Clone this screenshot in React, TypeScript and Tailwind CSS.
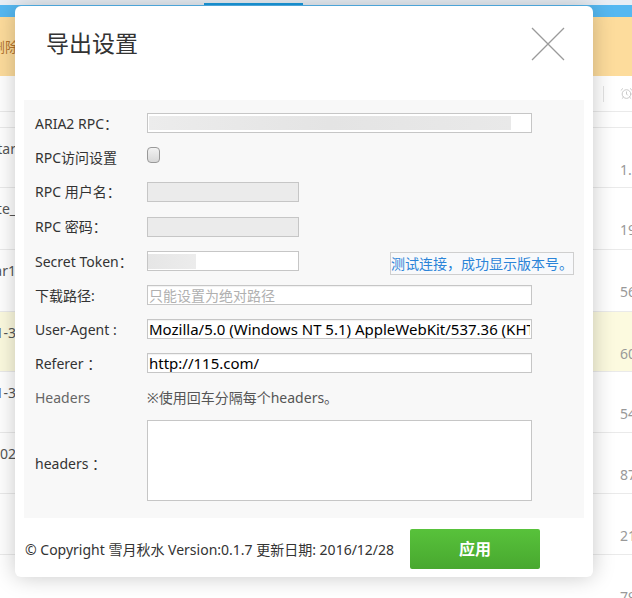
import { AlarmClock } from "lucide-react";

const FONT = {
  fontFamily: '"Noto Sans", "Noto Sans CJK SC", sans-serif',
};

interface BgRow {
  h: string;
  left: string;
  right: string;
  yellow?: boolean;
}

const ROWS: BgRow[] = [
  { h: "h-[60px]", left: "tar", right: "1.2G" },
  { h: "h-[62px]", left: "ate_", right: "19" },
  { h: "h-[62px]", left: "ar1", right: "56" },
  { h: "h-[60px]", left: "1-3", right: "60", yellow: true },
  { h: "h-[61px]", left: "1-3", right: "54" },
  { h: "h-[61px]", left: "202", right: "87" },
  { h: "h-[61px]", left: "", right: "21" },
  { h: "h-[61px]", left: "", right: "79" },
];

function Background() {
  return (
    <div className="flex flex-col">
      <div className="relative h-[5px] bg-[#e8eef5]">
        <div className="absolute left-[204px] top-[3px] h-[2px] w-[99px] bg-[#1a9be0]" />
      </div>
      <div className="h-[12px] bg-[#55b8f1]" />
      <div className="flex h-[59px] items-center bg-[#fddc9c]">
        <span className="ml-[-9px] text-[14px] text-[#b4742c]">删除</span>
      </div>
      <div className="flex h-[36px] items-center border-b border-[#eaeaea] bg-white">
        <div className="ml-[603px] h-[16px] w-px shrink-0 bg-[#e2e2e2]" />
        <AlarmClock size={13} strokeWidth={1.5} className="ml-[16px] shrink-0 text-[#bdbdbd]" />
      </div>
      <div className="h-[16px] border-b border-[#eaeaea] bg-white" />
      {ROWS.map((r, i) => (
        <div
          key={i}
          className={`flex border-b border-[#eaeaea] ${r.h} ${r.yellow ? "bg-[#fcfadf]" : "bg-white"}`}
        >
          <div className="flex w-[16px] shrink-0 justify-end overflow-hidden whitespace-nowrap pt-[12px] text-[14px] leading-[18px] text-[#555]">
            {r.left}
          </div>
          <div className="ml-[604px] shrink-0 whitespace-nowrap pt-[33px] text-[14px] leading-[18px] text-[#999]">
            {r.right}
          </div>
        </div>
      ))}
    </div>
  );
}

function Label({ children, muted }: { children: React.ReactNode; muted?: boolean }) {
  return (
    <div className={`w-[112px] shrink-0 text-[14px] ${muted ? "text-[#666]" : "text-[#333]"}`}>
      {children}
    </div>
  );
}

const inputCls =
  "h-[20px] border border-[#c6c6c6] bg-white px-[1px] text-[15px] leading-[18px] text-black outline-none shadow-[inset_0_1px_1px_rgba(0,0,0,0.06)]";

export default function App() {
  return (
    <div className="relative h-[598px] w-[632px] overflow-hidden bg-white" style={FONT}>
      <Background />

      <div className="absolute left-[15px] top-[6px] flex h-[571px] w-[578px] flex-col rounded-[6px] bg-white shadow-[0_0_22px_rgba(0,0,0,0.22)]">
        <div className="flex h-[94px] items-start justify-between">
          <h2 className="pl-[31px] pt-[22px] text-[23px] font-normal leading-[30px] text-[#333]">
            导出设置
          </h2>
          <svg
            width="34"
            height="34"
            viewBox="0 0 34 34"
            className="mr-[28px] mt-[21px]"
          >
            <path d="M1 1L33 33M33 1L1 33" stroke="#9a9a9a" strokeWidth="1.3" fill="none" />
          </svg>
        </div>

        <div className="mx-[9px] h-[418px] bg-[#f8f8f8] pl-[11px] pt-[6px]">
          <div className="flex h-[34px] items-center">
            <Label>ARIA2 RPC：</Label>
            <div className="flex h-[20px] w-[385px] items-center border border-[#c6c6c6] bg-white px-[1px]">
              <div className="h-[14px] w-[362px] bg-gradient-to-r from-[#ececec] via-[#e4e4e4] to-[#e9e9e9]" />
            </div>
          </div>

          <div className="flex h-[34px] items-center">
            <Label>RPC访问设置</Label>
            <div className="mt-[-4px] h-[16px] w-[13px] rounded-[4px] border border-[#999] bg-gradient-to-b from-[#f2f2f2] to-[#d8d8d8]" />
          </div>

          <div className="flex h-[35px] items-center">
            <Label>RPC 用户名：</Label>
            <div className="h-[20px] w-[152px] border border-[#c6c6c6] bg-[#ebebeb]" />
          </div>

          <div className="flex h-[35px] items-center">
            <Label>RPC 密码：</Label>
            <div className="h-[20px] w-[152px] border border-[#c6c6c6] bg-[#ebebeb]" />
          </div>

          <div className="flex h-[34px] items-center">
            <Label>Secret Token：</Label>
            <div className="flex h-[20px] w-[152px] items-center border border-[#c6c6c6] bg-white">
              <div className="h-[15px] w-[48px] bg-gradient-to-r from-[#e6e6e6] to-[#ececec]" />
            </div>
            <button
              type="button"
              className="ml-[91px] mt-[4px] h-[23px] w-[184px] overflow-hidden whitespace-nowrap border border-[#cfcfcf] bg-[#f8f9fb] text-left text-[14px] leading-[21px] text-[#2b84d8]"
            >
              测试连接，成功显示版本号。
            </button>
          </div>

          <div className="flex h-[34px] items-center">
            <Label>下载路径:</Label>
            <input
              readOnly
              placeholder="只能设置为绝对路径"
              className={`${inputCls} w-[385px] placeholder:text-[14px] placeholder:text-[#b0b0b0]`}
            />
          </div>

          <div className="flex h-[34px] items-center">
            <Label>User-Agent :</Label>
            <input
              readOnly
              defaultValue="Mozilla/5.0 (Windows NT 5.1) AppleWebKit/537.36 (KHTML, like Gecko) Chrome/55.0.2883.87 Safari/537.36"
              className={`${inputCls} w-[385px]`}
            />
          </div>

          <div className="flex h-[34px] items-center">
            <Label>Referer ：</Label>
            <input readOnly defaultValue="http://115.com/" className={`${inputCls} w-[385px]`} />
          </div>

          <div className="flex h-[34px] items-center">
            <Label muted>Headers</Label>
            <div className="text-[14px] text-[#555]">※使用回车分隔每个headers。</div>
          </div>

          <div className="mt-[6px] flex items-center">
            <div className="pt-[6px]">
              <Label>headers ：</Label>
            </div>
            <textarea
              readOnly
              className="h-[81px] w-[385px] resize-none border border-[#c6c6c6] bg-white outline-none"
            />
          </div>
        </div>

        <div className="flex flex-1 items-center justify-between pl-[10px] pr-[53px] pt-[3px]">
          <div className="text-[14px] text-[#333]">
            © Copyright 雪月秋水 Version:0.1.7 更新日期: 2016/12/28
          </div>
          <button
            type="button"
            className="h-[40px] w-[130px] rounded-[2px] bg-gradient-to-b from-[#58c23b] to-[#48a82f] text-[16px] font-bold text-white"
          >
            应用
          </button>
        </div>
      </div>
    </div>
  );
}
